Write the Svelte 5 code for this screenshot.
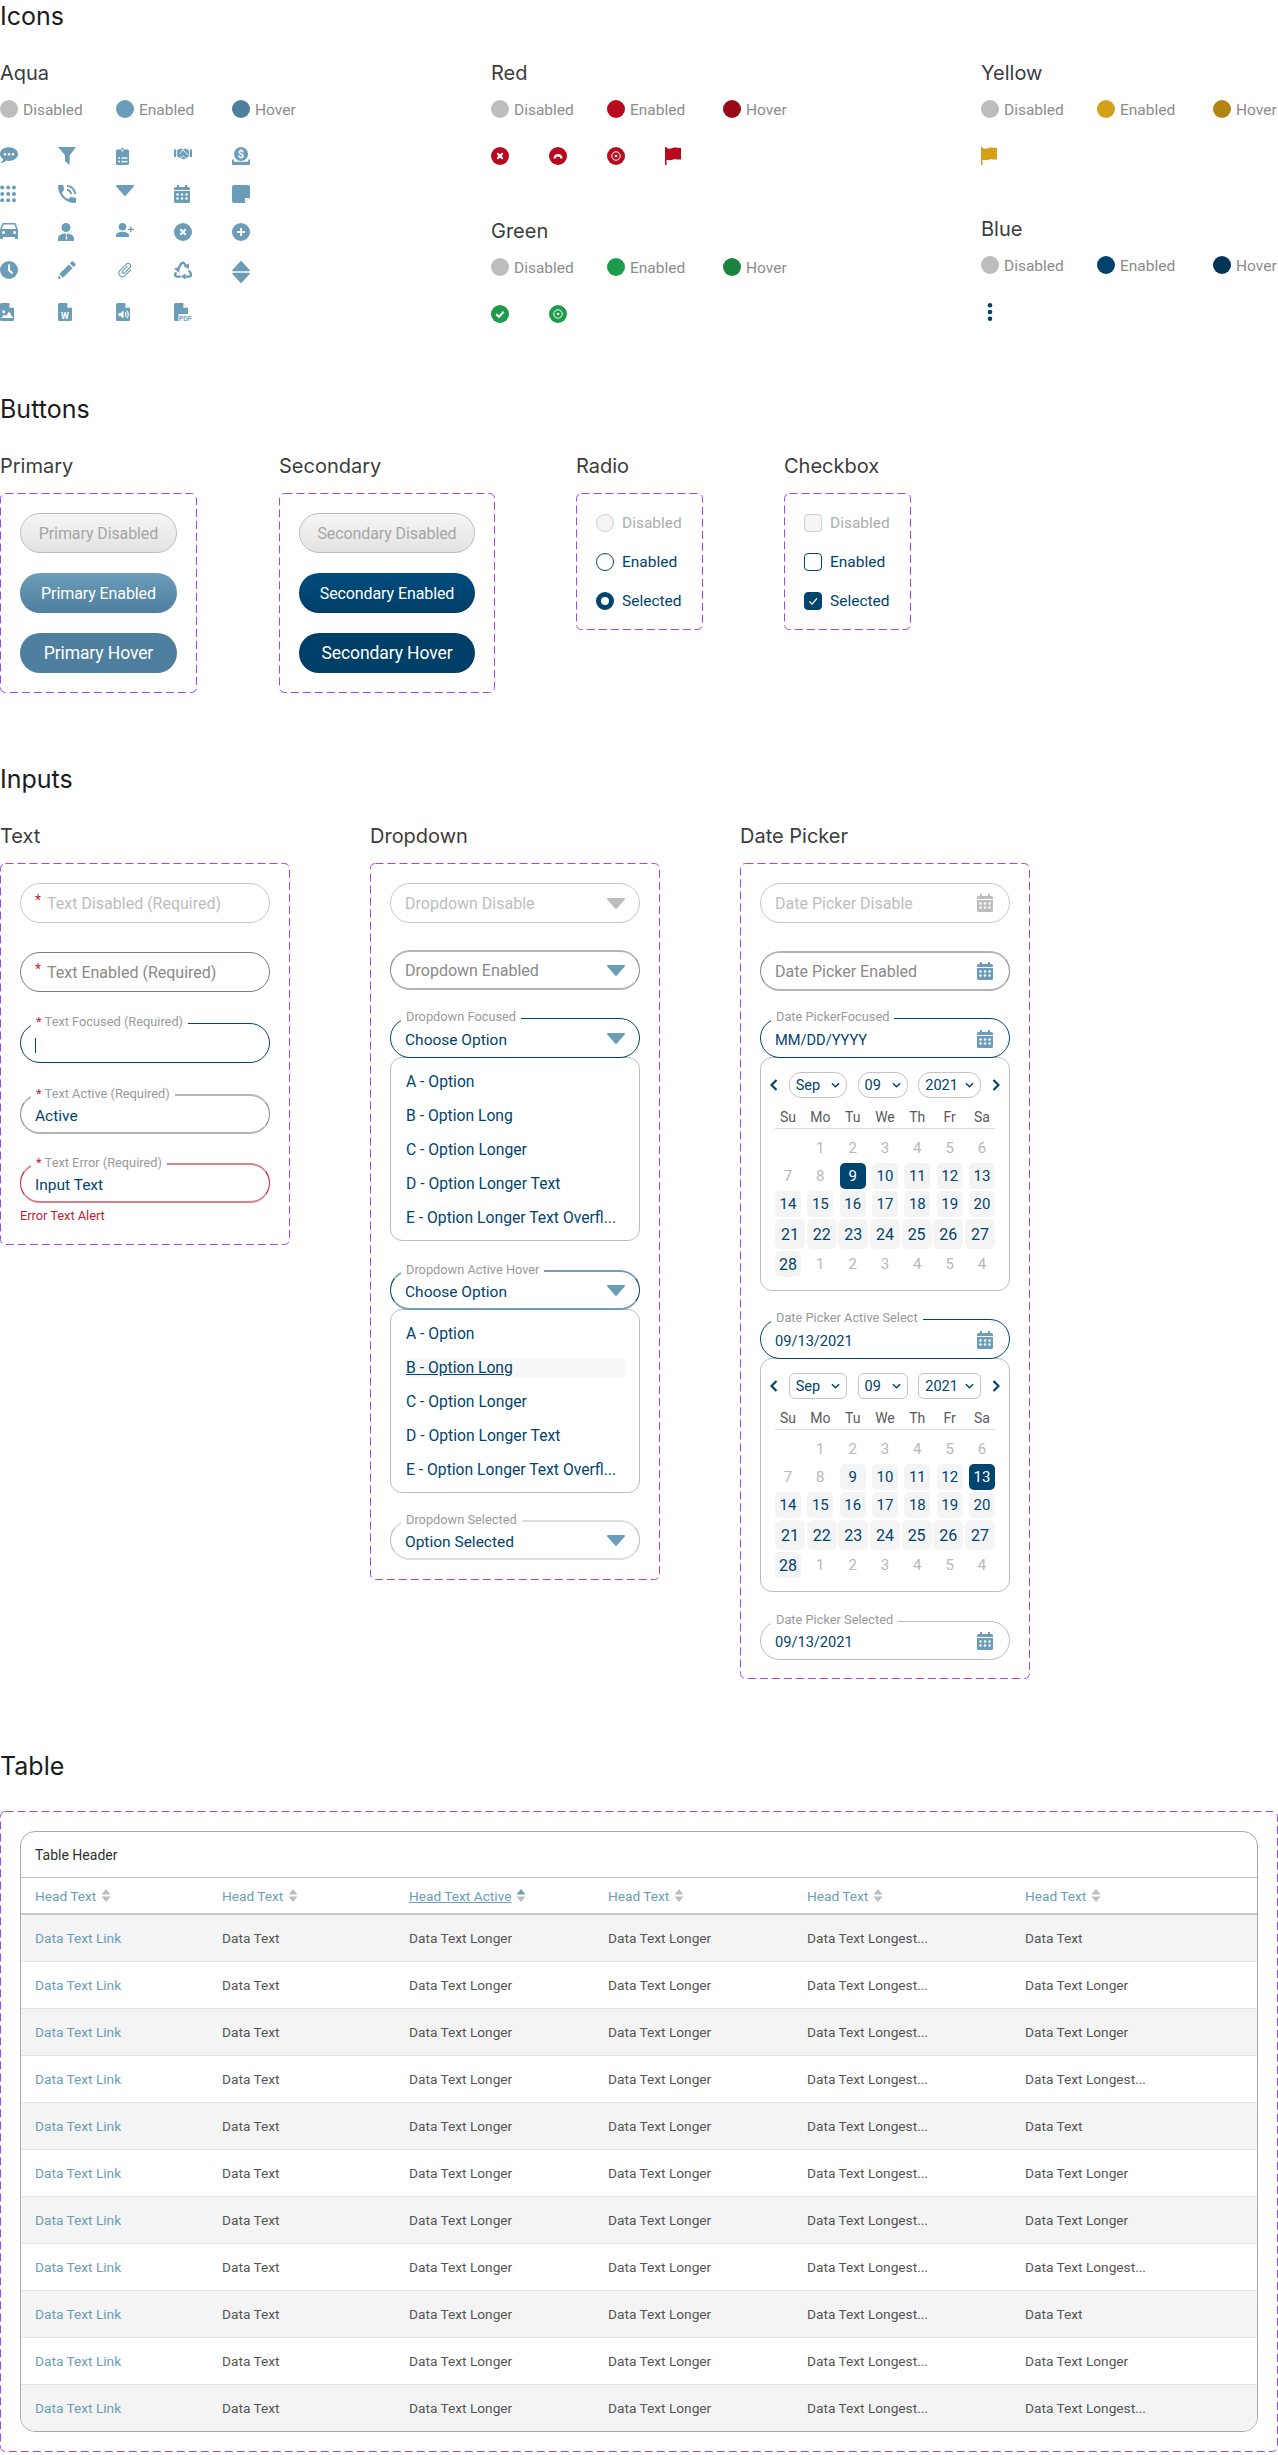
<script>
  const aquaIcons = [
    ['chat','funnel','clip','hands','money'],
    ['grid','phone','tri','cal','note'],
    ['car','person','adduser','xc','plus'],
    ['clock','pencil','attach','recycle','sort'],
    ['image','word','audio','pdf']
  ];
  const legend = (e, h) => [['Disabled','gray'],['Enabled',e],['Hover',h]];
  const opts = ['A - Option','B - Option Long','C - Option Longer','D - Option Longer Text','E - Option Longer Text Overfl...'];
  const dows = ['Su','Mo','Tu','We','Th','Fr','Sa'];
  const col6 = ['Data Text','Data Text Longer','Data Text Longer','Data Text Longest...'];
  const rows = Array.from({length:11},(_,i)=> i===10 ? col6[3] : col6[i%4]);
  const calRows = [
    [['',0],['1',0],['2',0],['3',0],['4',0],['5',0],['6',0]],
    [['7',0],['8',0],['9',1],['10',1],['11',1],['12',1],['13',1]],
    [['14',1],['15',1],['16',1],['17',1],['18',1],['19',1],['20',1]],
    [['21',1],['22',1],['23',1],['24',1],['25',1],['26',1],['27',1]],
    [['28',1],['1',0],['2',0],['3',0],['4',0],['5',0],['4',0]]
  ];
</script>

{#snippet icon(name, color)}
  <svg class="ic {color} i-{name}" viewBox={name==='phone' ? '3 3 18 18' : name==='car' ? '3 5 18 18' : name==='attach' ? '0 0 24 24' : name==='sort' ? '0 0 18 22' : name==='tri' ? '0 0 18 11' : '0 0 18 18'}>
    {#if name==='chat'}
      <path d="M9 .3C4 .3 0 3 0 7c0 2.3 1.3 4 3.3 5.1C2.9 13.7 1.6 15.4 0 16c2.5.1 5-.7 6.3-2.4.9.2 1.8.3 2.7.3 5 0 9-3 9-6.8S14 .3 9 .3z"/>
      <g class="w"><circle cx="5" cy="7.2" r="1.2"/><circle cx="9" cy="7.2" r="1.2"/><circle cx="13" cy="7.2" r="1.2"/></g>
    {:else if name==='funnel'}
      <path d="M0 0h18l-6.3 8.2V18L7 14.3V8.2z"/>
    {:else if name==='clip'}
      <path d="M1.5 2.5H5L6.5 0 8 2.5h3.5A1.5 1.5 0 0 1 13 4v12.5a1.5 1.5 0 0 1-1.5 1.5h-10A1.5 1.5 0 0 1 0 16.5V4a1.5 1.5 0 0 1 1.5-1.5z"/>
      <g class="w"><circle cx="6.5" cy="3.6" r="1"/><circle cx="3" cy="11" r="1"/><circle cx="3" cy="14.6" r="1"/><rect x="5.5" y="10.3" width="6" height="1.4"/><rect x="5.5" y="13.9" width="6" height="1.4"/></g>
    {:else if name==='hands'}
      <path d="M0 2.500h2.200v7.500H0zM15.800 2.500H18V10h-2.200zM3.200 3l3.800-1.600 2 1 2-1L14.800 3v6.500L9.500 12.600 3.200 9.500z"/>
      <path class="ws thin" d="M5.800 6.800 9 2.700l4.700 5M8.500 11.200 6.500 9M10.800 10.500 8.700 8.300"/>
    {:else if name==='money'}
      <circle cx="9" cy="7" r="7"/>
      <text class="w tx" x="9" y="10.600" text-anchor="middle">$</text>
      <path d="M0 12.500h1.800v1.300c0 .6.4 1 1 1h12.400c.6 0 1-.4 1-1v-1.300H18V17a1 1 0 0 1-1 1H1a1 1 0 0 1-1-1z"/>
    {:else if name==='grid'}
      {#each [2.200,8.200,14] as x}{#each [2.500,9,15.300] as y}<circle cx={x} cy={y} r="2"/>{/each}{/each}
    {:else if name==='phone'}
      <path d="M20 15.500c-1.250 0-2.450-.2-3.570-.57a1.020 1.020 0 0 0-1.020.24l-2.200 2.200a15.045 15.045 0 0 1-6.590-6.580l2.200-2.210a.96.96 0 0 0 .25-1A11.360 11.360 0 0 1 8.500 4c0-.55-.45-1-1-1H4c-.55 0-1 .45-1 1 0 9.390 7.610 17 17 17 .55 0 1-.45 1-1v-3.500c0-.55-.45-1-1-1z"/>
      <path d="M15 12h2c0-2.760-2.240-5-5-5v2c1.660 0 3 1.340 3 3zm4 0h2c0-4.970-4.030-9-9-9v2c3.870 0 7 3.130 7 7z"/>
    {:else if name==='tri'}
      <path d="M1 0h16a1 1 0 0 1 .8 1.6l-8 9a1 1 0 0 1-1.6 0l-8-9A1 1 0 0 1 1 0z"/>
    {:else if name==='cal'}
      <path d="M3 0h2v2h6V0h2v2h1.500A1.500 1.500 0 0 1 16 3.500v13a1.500 1.500 0 0 1-1.500 1.500h-13A1.500 1.500 0 0 1 0 16.500v-13A1.500 1.500 0 0 1 1.500 2H3z"/>
      <g class="w"><rect y="5" width="16" height="1"/>{#each [3.500,8,12.500] as x}{#each [9.500,13.500] as y}<circle cx={x} cy={y} r="1.200"/>{/each}{/each}</g>
    {:else if name==='note'}
      <path d="M2 0h14a2 2 0 0 1 2 2v10.500L12.500 18H2a2 2 0 0 1-2-2V2a2 2 0 0 1 2-2z"/>
      <path class="w" d="M13 13h4.200L13 17.200z"/>
    {:else if name==='car'}
      <path d="M18.920 6.010C18.720 5.420 18.160 5 17.500 5h-11c-.66 0-1.210.42-1.420 1.010L3 12v8c0 .55.45 1 1 1h1c.55 0 1-.45 1-1v-1h12v1c0 .55.45 1 1 1h1c.55 0 1-.45 1-1v-8l-2.080-5.990zM6.500 16c-.83 0-1.500-.67-1.500-1.500S5.670 13 6.500 13s1.500.67 1.500 1.500S7.330 16 6.500 16zm11 0c-.83 0-1.500-.67-1.500-1.500s.67-1.500 1.500-1.500 1.500.67 1.500 1.500-.67 1.500-1.500 1.500zM5 11l1.500-4.500h11L19 11H5z"/>
    {:else if name==='person'}
      <circle cx="8" cy="4.500" r="4.500"/>
      <path d="M0 18v-2.500C0 12 4 10.500 8 10.500s8 1.500 8 5V18z"/>
      <path class="w" d="M7 10.500h2l-.3 1.500.6 4.500H7.700l.6-4.500z"/>
    {:else if name==='adduser'}
      <circle cx="6.500" cy="3.800" r="3.800"/>
      <path d="M0 14v-1.500C0 9.800 3.500 8.700 6.500 8.700s6.500 1.100 6.500 3.800V14z"/>
      <path d="M14.200 3.500h1.300v2.200H18V7h-2.500v2.300h-1.300V7H12V5.700h2.200z"/>
    {:else if name==='xc'}
      <circle cx="9" cy="9" r="9"/><path class="ws s2" d="M6.300 6.300l5.400 5.400M11.700 6.300l-5.400 5.400"/>
    {:else if name==='plus'}
      <circle cx="9" cy="9" r="9"/><path class="ws s2" d="M9 5v8M5 9h8"/>
    {:else if name==='clock'}
      <circle cx="9" cy="9" r="9"/><path class="ws s2" d="M9 3.500V9l3.500 3.500"/>
    {:else if name==='pencil'}
      <path d="M13.500.8a1.500 1.500 0 0 1 2 0l1.700 1.700a1.500 1.500 0 0 1 0 2l-1.600 1.600-3.700-3.700zM10.900 3.400l3.700 3.700L5 16.700 1.300 13zM.8 14.500l2.700 2.700L0 18z"/>
    {:else if name==='attach'}
      <path transform="rotate(45 12 12)" d="M16.500 6v11.500c0 2.210-1.790 4-4 4s-4-1.790-4-4V5c0-1.380 1.120-2.500 2.500-2.500s2.500 1.120 2.500 2.500v10.500c0 .55-.45 1-1 1s-1-.45-1-1V6H10v9.500c0 1.380 1.120 2.500 2.500 2.500s2.500-1.120 2.500-2.500V5c0-2.210-1.790-4-4-4S7 2.790 7 5v12.500c0 3.040 2.460 5.500 5.500 5.500s5.500-2.460 5.500-5.500V6h-1.500z"/>
    {:else if name==='recycle'}
      <path class="st" d="M3.800 8.500 7.200 2.700c.8-1.300 2.500-1.300 3.300 0l1.700 2.800M15 9.500l1.900 3.400c.7 1.300-.1 2.700-1.500 2.700H11.500M6.800 15.600H2.900c-1.500 0-2.400-1.400-1.600-2.700l.9-1.500"/>
      <path d="M15.200 2.300l-.4 5.600-5-2.500zM11.600 12.300v6.200L7 15.400zM0 7.400l5.500-1.200-.1 5.800z"/>
    {:else if name==='sort'}
      <path d="M8.200.4a1 1 0 0 1 1.600 0l7.800 8.500c.5.500.1 1.300-.6 1.300H1c-.7 0-1.100-.8-.6-1.300z"/>
      <path d="M1 11.800h16c.7 0 1.100.8.600 1.300l-7.800 8.500a1 1 0 0 1-1.600 0L.4 13.100c-.5-.5-.1-1.300.6-1.300z"/>
    {:else if name==='image' || name==='word' || name==='audio'}
      <path d="M1.500 0H8.800L14 5.200V16.500A1.500 1.500 0 0 1 12.500 18h-11A1.500 1.500 0 0 1 0 16.500V1.500A1.500 1.500 0 0 1 1.500 0z"/>
      <path class="w" d="M9.400.8l3.900 3.900H9.400z"/>
      {#if name==='image'}
        <g class="w"><circle cx="3.800" cy="8.800" r="1.500"/><path d="M1 15l3.500-3.500 1.500 1.500 3-4.500L13 15z"/></g>
      {:else if name==='word'}
        <text class="w tw" x="7" y="15.500" text-anchor="middle">W</text>
      {:else}
        <g class="w"><path d="M2.500 10h2l3-2.500v8l-3-2.500h-2z"/></g><path class="ws" d="M9 9.500c1.200 1 1.200 3 0 4M10.800 8c2 1.800 2 5.200 0 7"/>
      {/if}
    {:else if name==='pdf'}
      <path d="M1.500 0H8.800L14 5.200V18H1.500A1.500 1.500 0 0 1 0 16.500V1.500A1.500 1.500 0 0 1 1.500 0z"/>
      <path class="w" d="M9.400.8l3.900 3.900H9.400z"/>
      <rect class="w" x="4.500" y="11" width="13.500" height="7"/>
      <text class="tp" x="5" y="17.800" textLength="12.500" lengthAdjust="spacingAndGlyphs">PDF</text>
    {:else if name==='hang'}
      <circle cx="9" cy="9" r="9"/><path class="w" d="M4.500 10.500C5 8 7 6.900 9 6.900s4 1.100 4.500 3.600c.1.700-.4 1-.9 1h-1c-.4 0-.7-.3-.7-.7V10c-1-.5-2.800-.5-3.800 0v.8c0 .4-.3.700-.7.700h-1c-.5 0-1-.3-.9-1z"/>
    {:else if name==='target'}
      <circle cx="9" cy="9" r="9"/><circle class="ws thin" cx="9" cy="9" r="4.200"/><circle class="w" cx="9" cy="9" r="1.300"/>
    {:else if name==='flag'}
      <path d="M0 0h1.500v1.100c2.200.9 3.700.9 6-.1 2.500-1 5-.2 8.500 0v11.500c-3 .5-5-.7-7-.2-2.800.9-5 1.300-7.500.5V18H0z"/>
    {:else if name==='check'}
      <circle cx="9" cy="9" r="9"/><path class="ws s2" d="M5.300 9.300l2.600 2.600 4.800-5.200"/>
    {:else if name==='kebab'}
      <circle cx="9" cy="2.300" r="2.300"/><circle cx="9" cy="9" r="2.300"/><circle cx="9" cy="15.700" r="2.300"/>
    {/if}
  </svg>
{/snippet}

{#snippet legendRow(items)}
  <div class="legend">
    {#each items as [t, c]}
      <div class="lg"><span class="dot bg-{c}"></span><span class="lgt">{t}</span></div>
    {/each}
  </div>
{/snippet}

{#snippet dashed()}
  <svg class="dash" aria-hidden="true"><rect x=".5" y=".5" rx="5" ry="5" /></svg>
{/snippet}

{#snippet field(state, label, value, kind, cls)}
  <div class="field {state} k-{kind} {cls}">
    {#if label}<span class="flabel">{#if kind==='text'}<span class="lstar">*</span>{/if}{label}</span>{/if}
    <span class="val">{#if value==='|'}<span class="caret"></span>{:else}{value}{/if}</span>
    {#if kind==='drop'}{@render icon('tri', state==='f-dis' ? 'gray' : 'aqua')}{/if}
    {#if kind==='date'}{@render icon('cal', state==='f-dis' ? 'gray' : 'aqua')}{/if}
  </div>
{/snippet}

{#snippet optList(hover)}
  <ul class="list">
    {#each opts as o, i}<li class:hov={hover && i===1}>{o}</li>{/each}
  </ul>
{/snippet}

{#snippet chev(dir)}
  <svg class="nav-arrow" viewBox="0 0 8 12"><path d={dir==='l' ? 'M6.500 1 1.500 6l5 5' : 'M1.500 1l5 5-5 5'}/></svg>
{/snippet}
{#snippet sel(t, cls, square)}
  <div class="sel {cls}" class:square><span>{t}</span><svg viewBox="0 0 10 6"><path d="M1 1l4 4 4-4"/></svg></div>
{/snippet}

{#snippet calendar(selected, square)}
  <div class="cal">
    <div class="nav">
      {@render chev('l')}
      {@render sel('Sep','s1',square)}
      {@render sel('09','s2',square)}
      {@render sel('2021','s3',square)}
      {@render chev('r')}
    </div>
    <div class="dows">{#each dows as d}<span>{d}</span>{/each}</div>
    <div class="weeks">
      {#each calRows as r, ri}
        <div class="wk" class:big={ri===3}>
          {#each r as [t, on]}
            <span class="day" class:on class:sel-day={on && t===selected} class:bigtx={t==='28'}>{t}</span>
          {/each}
        </div>
      {/each}
    </div>
  </div>
{/snippet}

<main class="page">
  <section>
    <h1>Icons</h1>
    <div class="icon-cols">
      <div class="c1">
        <h2>Aqua</h2>
        {@render legendRow(legend('aqua','aquah'))}
        <div class="icon-grid">
          {#each aquaIcons as row}
            <div class="icon-row">
              {#each row as n}<span class="cell">{@render icon(n,'aqua')}</span>{/each}
            </div>
          {/each}
        </div>
      </div>
      <div class="c2">
        <div>
          <h2>Red</h2>
          {@render legendRow(legend('red','redh'))}
          <div class="icon-row first">
            {#each ['xc','hang','target','flag'] as n}<span class="cell">{@render icon(n,'red')}</span>{/each}
          </div>
        </div>
        <div class="greenblock">
          <h2>Green</h2>
          {@render legendRow(legend('green','greenh'))}
          <div class="icon-row first">
            {#each ['check','target'] as n}<span class="cell">{@render icon(n,'green')}</span>{/each}
          </div>
        </div>
      </div>
      <div class="c3">
        <div>
          <h2>Yellow</h2>
          {@render legendRow(legend('yellow','yellowh'))}
          <div class="icon-row first"><span class="cell">{@render icon('flag','yellow')}</span></div>
        </div>
        <div class="blue">
          <h2>Blue</h2>
          {@render legendRow(legend('navy','navyh'))}
          <div class="icon-row first"><span class="cell">{@render icon('kebab','navy')}</span></div>
        </div>
      </div>
    </div>
  </section>

  <section class="buttons">
    <h1>Buttons</h1>
    <div class="btn-cols">
      <div class="col-p">
        <h2>Primary</h2>
        <div class="box stack20">
          {@render dashed()}
          <button class="btn dis">Primary Disabled</button>
          <button class="btn pri">Primary Enabled</button>
          <button class="btn pri-h">Primary Hover</button>
        </div>
      </div>
      <div class="col-s">
        <h2>Secondary</h2>
        <div class="box stack20">
          {@render dashed()}
          <button class="btn dis">Secondary Disabled</button>
          <button class="btn sec">Secondary Enabled</button>
          <button class="btn sec-h">Secondary Hover</button>
        </div>
      </div>
      <div class="col-r">
        <h2>Radio</h2>
        <div class="box opts">
          {@render dashed()}
          <div class="opt off"><span class="rd rd-off"></span>Disabled</div>
          <div class="opt"><span class="rd"></span>Enabled</div>
          <div class="opt"><span class="rd rd-on"></span>Selected</div>
        </div>
      </div>
      <div class="col-c">
        <h2>Checkbox</h2>
        <div class="box opts">
          {@render dashed()}
          <div class="opt off"><span class="cb rd-off"></span>Disabled</div>
          <div class="opt"><span class="cb"></span>Enabled</div>
          <div class="opt"><span class="cb cb-on"><svg viewBox="0 0 18 18"><path d="M5 9.500l3 3 5.500-6.500"/></svg></span>Selected</div>
        </div>
      </div>
    </div>
  </section>

  <section class="inputs">
    <h1>Inputs</h1>
    <div class="input-cols">
      <div class="col-i">
        <h2>Text</h2>
        <div class="box">
          {@render dashed()}
          <div class="field f-dis"><span class="inner-star">*</span><span class="val">Text Disabled (Required)</span></div>
          <div class="field f-en m29"><span class="inner-star">*</span><span class="val">Text Enabled (Required)</span></div>
          {@render field('f-foc','Text Focused (Required)','|','text','m31 withlabel')}
          {@render field('f-act','Text Active (Required)','Active','text','m31 withlabel')}
          {@render field('f-err','Text Error (Required)','Input Text','text','m29 withlabel')}
          <div class="err">Error Text Alert</div>
        </div>
      </div>
      <div class="col-i">
        <h2>Dropdown</h2>
        <div class="box">
          {@render dashed()}
          {@render field('f-dis','','Dropdown Disable','drop','')}
          {@render field('f-en2','','Dropdown Enabled','drop','m27')}
          {@render field('f-foc','Dropdown Focused','Choose Option','drop','m28 withlabel')}
          {@render optList(false)}
          {@render field('f-hov','Dropdown Active Hover','Choose Option','drop','m29 withlabel')}
          {@render optList(true)}
          {@render field('f-selc','Dropdown Selected','Option Selected','drop','m27 withlabel')}
        </div>
      </div>
      <div class="col-i">
        <h2>Date Picker</h2>
        <div class="box date-box">
          {@render dashed()}
          {@render field('f-dis','','Date Picker Disable','date','')}
          {@render field('f-en2','','Date Picker Enabled','date','m28')}
          {@render field('f-foc','Date PickerFocused','MM/DD/YYYY','date','m27 withlabel')}
          {@render calendar('9', false)}
          {@render field('f-foc','Date Picker Active Select','09/13/2021','date','m28 withlabel')}
          {@render calendar('13', true)}
          {@render field('f-selc2','Date Picker Selected','09/13/2021','date','m29 withlabel')}
        </div>
      </div>
    </div>
  </section>

  <section class="tbl-sec">
    <h1>Table</h1>
    <div class="box tbox">
      {@render dashed()}
      <div class="tbl">
        <div class="t-title">Table Header</div>
        <table>
          <colgroup><col class="w0"/><col class="w1"/><col class="w2"/><col class="w2"/><col class="w3"/><col/></colgroup>
          <thead>
            <tr>
              {#each ['Head Text','Head Text','Head Text Active','Head Text','Head Text','Head Text'] as h, i}
                <th>
                  <span class:act={i===2}>{h}</span>
                  <svg class="srt" viewBox="0 0 10 13"><path class:up={i===2} d="M5 0l4.500 5.500h-9z"/><path d="M.5 7.500h9L5 13z"/></svg>
                </th>
              {/each}
            </tr>
          </thead>
          <tbody>
            {#each rows as last, i}
              <tr class:stripe={i%2===0}>
                <td class="lnk">Data Text Link</td>
                <td>Data Text</td>
                <td>Data Text Longer</td>
                <td>Data Text Longer</td>
                <td>Data Text Longest...</td>
                <td>{last}</td>
              </tr>
            {/each}
          </tbody>
        </table>
      </div>
    </div>
  </section>
</main>

<style>
  :global(body) { margin: 0; background: #fff; }
  .page { width: 1278px; height: 2455px; overflow: hidden; font-family: Roboto, "Liberation Sans", sans-serif; font-size: 16px; color: #004470; }
  h1 { margin: 0 0 29px; font: 400 25px/32px Inter, sans-serif; color: #1c1c1c; }
  h2 { margin: 0 0 15px; font: 400 20px/24px Inter, sans-serif; color: #3c3c3c; }
  .buttons { margin-top: 70px; }
  .inputs { margin-top: 70px; }
  .tbl-sec { margin-top: 71px; }

  .icon-cols { display: grid; grid-template-columns: 491px 490px 1fr; }
  .legend { display: flex; }
  .lg { width: 116px; display: flex; align-items: center; gap: 5px; height: 18px; color: #8c8c8c; font-size: 15.500px; white-space: nowrap; flex: none; }
  .lg:last-child { width: 60px; }
  .lgt { padding-top: 2px; }
  .dot { width: 18px; height: 18px; border-radius: 50%; flex: none; }
  .bg-gray { background: #bdbdbd; } .bg-aqua { background: #6b9db8; } .bg-aquah { background: #4e7f9f; }
  .bg-red { background: #b70a1f; } .bg-redh { background: #990918; }
  .bg-green { background: #1f9c4b; } .bg-greenh { background: #1a843f; }
  .bg-yellow { background: #d3a018; } .bg-yellowh { background: #b08512; }
  .bg-navy { background: #00426e; } .bg-navyh { background: #003558; }
  .icon-grid { margin-top: 29px; display: flex; flex-direction: column; gap: 20px; }
  .icon-row { display: flex; align-items: flex-start; }
  .icon-row.first { margin-top: 29px; }
  .cell { width: 58px; flex: none; display: block; }
  .ic { width: 18px; height: 18px; display: block; fill: currentColor; flex: none; }
  .i-sort { height: 22px; }
  .i-tri { height: 11px; }
  .aqua { color: #6b9db8; } .gray { color: #bdbdbd; } .red { color: #b70a1f; }
  .green { color: #1f9c4b; } .yellow { color: #d3a018; } .navy { color: #00426e; }
  .w { fill: #fff; }
  .ws { fill: none; stroke: #fff; stroke-width: 1.200; }
  .thin { stroke-width: 1; }
  .s2 { stroke-width: 2; }
  .st { fill: none; stroke: currentColor; stroke-width: 2.400; }
  .tx { font: 700 11px Roboto, sans-serif; }
  .tw { font: 700 9px Roboto, sans-serif; }
  .tp { font: 700 7px "Liberation Sans", sans-serif; fill: currentColor; }
  .greenblock { margin-top: 54px; }
  .blue { margin-top: 52px; }

  .box { position: relative; padding: 20px; box-sizing: border-box; }
  .date-box { padding-bottom: 19px; }
  .dash { position: absolute; inset: 0; width: 100%; height: 100%; pointer-events: none; overflow: visible; }
  .dash rect { width: calc(100% - 1px); height: calc(100% - 1px); fill: none; stroke: #9747ff; stroke-width: 1; stroke-dasharray: 8 4; }

  .btn-cols { display: flex; }
  .col-p { width: 279px; } .col-p .box { width: 197px; } .col-p .btn { width: 157px; }
  .col-s { width: 297px; } .col-s .box { width: 216px; } .col-s .btn { width: 176px; }
  .col-r { width: 208px; } .col-r .box { width: 127px; }
  .col-c .box { width: 127px; }
  .stack20 { display: flex; flex-direction: column; gap: 20px; }
  .btn { height: 40px; border-radius: 20px; border: 0; padding: 0; font: 400 16px Roboto, sans-serif; color: #fff; letter-spacing: -.1px; }
  .btn.dis { background: linear-gradient(#f6f6f6, #e3e3e3); border: 1px solid #bdbdbd; color: #a6a6a6; }
  .pri { background: linear-gradient(#6b9db8, #4e7f9f); }
  .pri-h { background: #4e7f9f; font-size: 17.500px; }
  .sec { background: linear-gradient(#004c7e, #003e68); }
  .sec-h { background: #003f68; font-size: 17.500px; }
  .opts { display: flex; flex-direction: column; gap: 21px; height: 137px; padding-top: 21px; }
  .opt { display: flex; align-items: center; gap: 8px; height: 18px; font-size: 15.500px; color: #004470; }
  .opt.off { color: #adadad; }
  .rd, .cb { width: 18px; height: 18px; box-sizing: border-box; border: 1px solid #004470; background: #fff; flex: none; display: block; }
  .rd { border-radius: 50%; }
  .cb { border-radius: 4px; }
  .rd-off { background: #f5f5f5; border-color: #cfcfcf; }
  .rd-on { border: 5.500px solid #004470; }
  .cb-on { background: #004470; }
  .cb-on svg { display: block; width: 16px; height: 16px; fill: none; stroke: #fff; stroke-width: 1.500; }

  .input-cols { display: flex; gap: 80px; }
  .col-i { width: 290px; }
  .field { position: relative; height: 40px; box-sizing: border-box; border: 1px solid #bdbdbd; border-radius: 20px; padding: 0 14px; display: flex; align-items: center; justify-content: space-between; background: #fff; color: #004470; }
  .val { white-space: nowrap; flex: 1; min-width: 0; }
  .withlabel .val { padding-top: 3px; font-size: 15.500px; }
  .k-date.withlabel .val { font-size: 14.600px; }
  .withlabel .ic { margin-top: 1px; }
  .f-dis { color: #bdbdbd; border-color: #c8c8c8; }
  .f-en { color: #8a8a8a; border-color: #7c7c7c; }
  .f-en2 { color: #8a8a8a; border-width: 2px 1px; border-color: #b4b4b4 #8a8a8a; }
  .f-foc { border-color: #004470; }
  .f-act { border-width: 2px 1px; border-color: #b4b4b4 #8a8a8a; }
  .f-err { border-width: 2px 1px; border-color: #dc7f8b #c21f36; }
  .f-hov { border-width: 2px 1px; border-color: #739cb5 #004470; }
  .f-selc { border-width: 2px 1px; border-color: #dedede #bdbdbd; }
  .f-selc2 { border-color: #bdbdbd; height: 39px; }
  .flabel { position: absolute; left: 10px; top: -9px; padding: 0 5px; height: 14px; line-height: 14px; background: #fff; font-size: 12.800px; color: #9a9a9a; white-space: nowrap; }
  .lstar { color: #c21f36; margin-right: 3px; font-size: 13px; }
  .inner-star { color: #c21f36; font-size: 14px; margin: -6px 6px 0 0; }
  .caret { display: inline-block; width: 1px; height: 15px; background: #004470; vertical-align: middle; }
  .m27 { margin-top: 27px; } .m28 { margin-top: 28px; } .m29 { margin-top: 29px; } .m31 { margin-top: 31px; }
  .err { margin-top: 5px; color: #c21f36; font-size: 13px; line-height: 15px; height: 15px; margin-bottom: 2px; letter-spacing: -.1px; }

  .list { list-style: none; margin: -1px 0 0; padding: 15px 14px 13px 14px; box-sizing: border-box; height: 184px; border: 1px solid #bdbdbd; border-radius: 12px; display: flex; flex-direction: column; gap: 16px; font-size: 15.700px; background: #fff; }
  .list li { height: 18px; line-height: 18px; padding-left: 1px; white-space: nowrap; }
  .list li.hov { background: #f7f7f7; text-decoration: underline; }

  .cal { box-sizing: border-box; margin-top: -1px; height: 234px; border: 1px solid #bdbdbd; border-radius: 12px; padding: 14px 14px 0; }
  .nav { display: flex; align-items: center; justify-content: space-between; margin: 0 -5px; height: 26px; }
  .nav-arrow { width: 8px; height: 12px; fill: none; stroke: #004470; stroke-width: 2.200; flex: none; }
  .sel { box-sizing: border-box; height: 26px; border: 1px solid #c4c4c4; border-radius: 12px; display: flex; align-items: center; justify-content: space-between; padding: 0 6px; font-size: 14.500px; color: #004470; flex: none; }
  .sel.square { border-radius: 6px; }
  .sel svg { width: 9px; height: 6px; fill: none; stroke: #004470; stroke-width: 1.600; }
  .s1 { width: 58px; } .s2 { width: 50px; } .s3 { width: 63px; }
  .dows { display: flex; justify-content: space-between; margin-top: 10px; height: 20px; border-bottom: 1px solid #dcdcdc; font-size: 14px; color: #595959; }
  .dows span { width: 26px; text-align: center; line-height: 18px; }
  .weeks { margin-top: 6px; display: flex; flex-direction: column; gap: 2px; }
  .wk { display: flex; justify-content: space-between; }
  .day { width: 26px; height: 26px; border-radius: 5px; text-align: center; line-height: 27px; font-size: 15px; color: #b8b8b8; }
  .day.on { background: #f4f4f4; color: #004470; }
  .day.sel-day { background: #004470; color: #fff; }
  .wk.big .day { width: 30px; height: 30px; line-height: 31px; font-size: 16px; border-radius: 6px; }
  .bigtx { font-size: 16px; }

  .tbox { width: 1278px; height: 641px; }
  .tbl { border: 1px solid #a8a8a8; border-radius: 15px; overflow: hidden; box-sizing: border-box; height: 601px; }
  .t-title { height: 45px; line-height: 46px; padding-left: 14px; font-size: 14px; color: #2f2f2f; border-bottom: 1px solid #bdbdbd; }
  table { border-collapse: collapse; table-layout: fixed; width: 100%; }
  .w0 { width: 186px; } .w1 { width: 187px; } .w2 { width: 199px; } .w3 { width: 218px; }
  th { height: 36px; padding: 0 0 0 15px; text-align: left; font-weight: 400; font-size: 13.700px; color: #6b9db8; border-bottom: 2px solid #c6c6c6; white-space: nowrap; box-sizing: border-box; }
  th:first-child, td:first-child { padding-left: 14px; }
  th .act { text-decoration: underline; }
  .srt { width: 10px; height: 13px; fill: #bdbdbd; margin-left: 1px; vertical-align: -1px; }
  .srt .up { fill: #6b9db8; }
  td { height: 47px; box-sizing: border-box; padding: 0 0 0 15px; font-size: 13.700px; color: #555; border-bottom: 1px solid #e4e4e4; white-space: nowrap; }
  tr:last-child td { border-bottom: 0; }
  .stripe td { background: #f4f4f4; }
  td.lnk { color: #6b9db8; }
</style>
